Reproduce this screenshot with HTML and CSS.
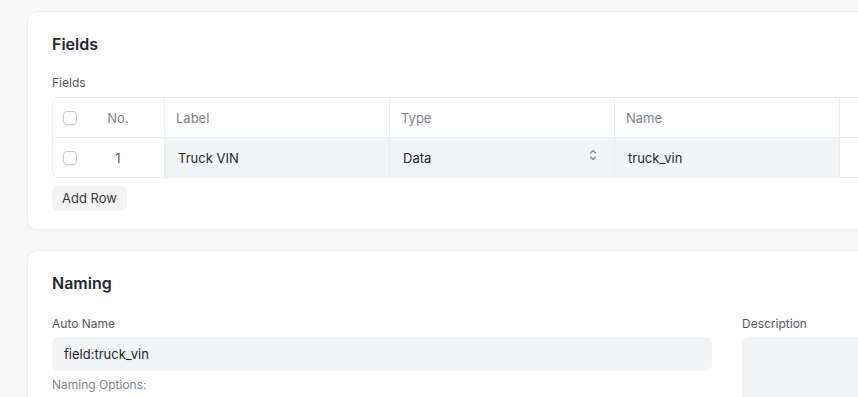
FILE: index.html
```html
<!DOCTYPE html>
<html lang="en">
<head>
    <meta charset="UTF-8">
    <meta name="viewport" content="width=device-width, initial-scale=1.0">
    <title>DocType - Fields</title>
    <link rel="stylesheet" href="styles.css">
</head>
<body>
    <div class="page">
        <div class="card">
            <h2 class="section-title">Fields</h2>
            <div class="control-label table-label">Fields</div>
            <div class="grid">
                <div class="grid-row grid-head">
                    <div class="cell cell-index">
                        <span class="check"></span>
                        <span class="row-no">No.</span>
                    </div>
                    <div class="cell">Label</div>
                    <div class="cell">Type</div>
                    <div class="cell">Name</div>
                    <div class="cell cell-action"></div>
                </div>
                <div class="grid-row grid-body">
                    <div class="cell cell-index">
                        <span class="check"></span>
                        <span class="row-no row-num">1</span>
                    </div>
                    <div class="cell cell-input">Truck VIN</div>
                    <div class="cell cell-input cell-select">
                        <span>Data</span>
                        <svg class="select-icon" width="8" height="12" viewBox="0 0 8 12" fill="none" stroke="#7c848c" stroke-width="1.1" stroke-linecap="round" stroke-linejoin="round">
                            <path d="M1.5 4 L4 1.5 L6.5 4"/>
                            <path d="M1.5 8 L4 10.5 L6.5 8"/>
                        </svg>
                    </div>
                    <div class="cell cell-input">truck_vin</div>
                    <div class="cell cell-action"></div>
                </div>
            </div>
            <button class="btn-small">Add Row</button>
        </div>

        <div class="card">
            <h2 class="section-title">Naming</h2>
            <div class="columns">
                <div class="column">
                    <div class="control-label">Auto Name</div>
                    <div class="input">field:truck_vin</div>
                    <div class="control-label options-label">Naming Options:</div>
                </div>
                <div class="column">
                    <div class="control-label">Description</div>
                    <div class="textarea"></div>
                </div>
            </div>
        </div>
    </div>
</body>
</html>
```

FILE: styles.css
```css
body {
    margin: 0;
    background: #f8f8f8;
    font-family: Inter, "Noto Sans", sans-serif;
    color: #1f272e;
    overflow: hidden;
}
.page {
    width: 1200px;
    padding: 11px 0 0 27px;
}
.card {
    background: white;
    border: 1px solid #ededed;
    border-radius: 10px;
    box-shadow: 0 1px 3px rgba(0,0,0,0.04);
    padding: 20px 24px 18px;
    margin-bottom: 20px;
}
.section-title {
    margin: 0;
    font-size: 16px;
    line-height: 24px;
    font-weight: 600;
    color: #1f272e;
}
.control-label {
    margin-top: 20px;
    font-size: 12px;
    line-height: 18px;
    color: #525960;
}
.table-label {
    margin-top: 18px;
}
.grid {
    margin-top: 5px;
    border: 1px solid #ebeef0;
    border-radius: 6px;
    overflow: hidden;
}
.grid-row {
    display: flex;
    height: 39px;
    font-size: 13px;
}
.grid-head {
    border-bottom: 1px solid #ebeef0;
    color: #7c848c;
}
.cell {
    width: 225px;
    box-sizing: border-box;
    border-right: 1px solid #ebeef0;
    padding: 0 11px;
    display: flex;
    align-items: center;
}
.cell-index {
    width: 112px;
    padding: 0 10px;
}
.cell-action {
    width: 120px;
    border-right: none;
}
.check {
    width: 12px;
    height: 12px;
    border: 1px solid #c4cbd1;
    border-radius: 4px;
    box-shadow: 0 1px 2px rgba(0,0,0,0.06);
}
.row-no {
    flex: 1;
    text-align: center;
    margin-left: 5px;
}
.row-num {
    color: #74508a;
}
.cell-input {
    background: #f3f4f5;
    color: #1f272e;
    padding: 0 13px;
}
.cell-select {
    justify-content: space-between;
}
.select-icon {
    margin-right: 4px;
    margin-top: -5px;
}
.btn-small {
    margin-top: 8px;
    background: #f3f3f3;
    border: none;
    border-radius: 6px;
    font-family: inherit;
    font-size: 13px;
    line-height: 17px;
    padding: 4px 10px;
    color: #383838;
    width: 75px;
    height: 25px;
}
.columns {
    display: grid;
    grid-template-columns: 660px 1fr;
    column-gap: 30px;
}
.input {
    margin-top: 4px;
    height: 34px;
    box-sizing: border-box;
    background: #f3f4f5;
    border-radius: 7px;
    padding: 0 12px;
    display: flex;
    align-items: center;
    font-size: 13px;
    color: #1f272e;
}
.options-label {
    margin-top: 5px;
    color: #7c848c;
}
.textarea {
    margin-top: 4px;
    height: 120px;
    background: #f3f4f5;
    border-radius: 7px;
}
```
